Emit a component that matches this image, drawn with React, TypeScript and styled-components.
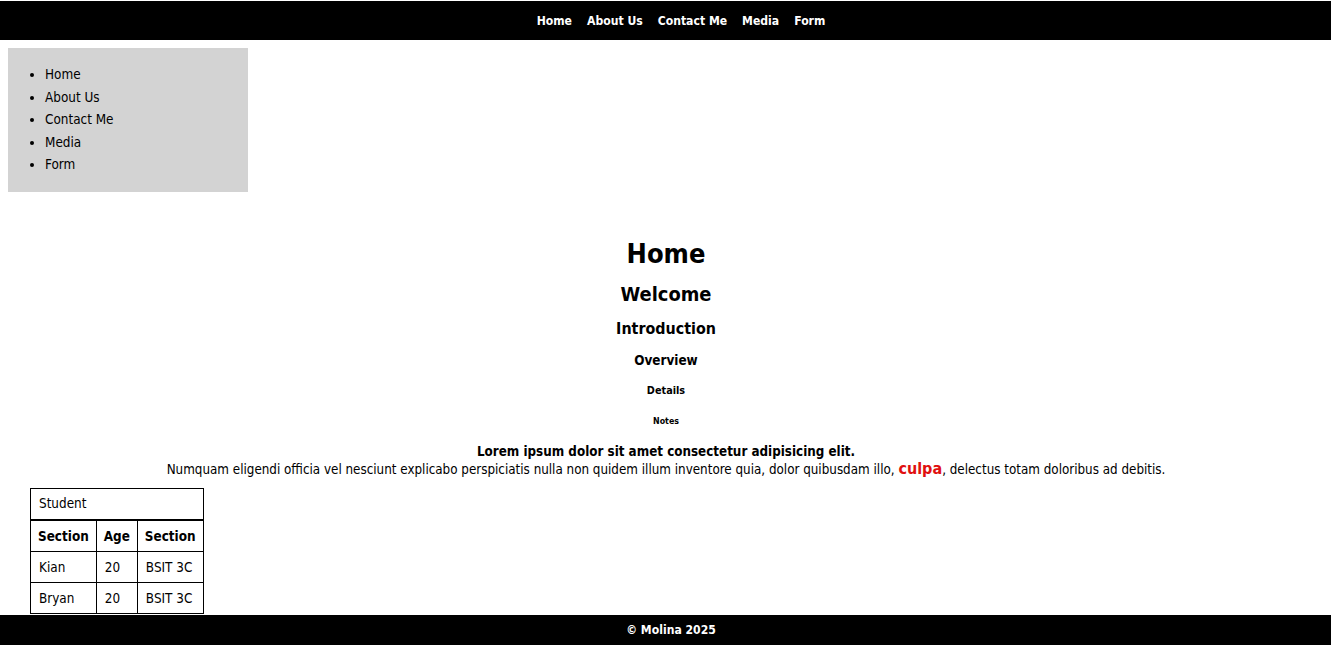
import React from "react";
import styled, { createGlobalStyle } from "styled-components";

const Global = createGlobalStyle`
  html, body { margin: 0; padding: 0; background: #fff; }
  body {
    font-family: "DejaVu Sans Condensed", "DejaVu Sans", sans-serif;
    font-stretch: condensed;
    font-size: 13.4px;
    color: #000;
  }
`;

const Header = styled.header`
  margin: 1px 1px 0 0;
  height: 39px;
  background: #000;
  display: flex;
  align-items: center;
  justify-content: center;
`;

const TopNav = styled.nav`
  display: flex;
  gap: 15px;
  padding-left: 31px;
`;

const TopLink = styled.a`
  color: #fff;
  font-size: 12.1px;
  font-weight: 600;
  text-decoration: none;
`;

const Page = styled.div`
  padding: 8px 8px 0;
`;

const Sidebar = styled.aside`
  width: 240px;
  height: 144px;
  background: #d3d3d3;
  box-sizing: border-box;
  padding-top: 16px;
`;

const SideList = styled.ul`
  margin: 0;
  padding-left: 37px;
  list-style: disc;
`;

const SideItem = styled.li`
  font-size: 13.4px;
  line-height: 22.5px;
`;

const Main = styled.main`
  text-align: center;
`;

const H1 = styled.h1`
  margin: 42px 0 0;
  font-size: 27px;
  line-height: 40px;
`;
const H2 = styled.h2`
  margin: 0;
  font-size: 19.9px;
  line-height: 42px;
`;
const H3 = styled.h3`
  margin: 0;
  font-size: 15.9px;
  line-height: 26px;
`;
const H4 = styled.h4`
  margin: 0;
  font-size: 13.4px;
  line-height: 38px;
`;
const H5 = styled.h5`
  margin: 0;
  font-size: 10.8px;
  line-height: 22px;
`;
const H6 = styled.h6`
  margin: 0;
  font-size: 8.8px;
  line-height: 38px;
`;

const Para = styled.p`
  margin: 3px 0 10px;
  font-size: 13.3px;
  line-height: 17px;
`;

const Accent = styled.span`
  color: #e01010;
  font-weight: bold;
  font-size: 16px;
`;

const Table = styled.table`
  margin-left: 22px;
  border-collapse: collapse;
  border: 1px solid #000;
  font-size: 13.4px;
  text-align: left;
`;

const Caption = styled.caption`
  border: 1px solid #000;
  text-align: left;
  padding: 0 8px;
  height: 30px;
  line-height: 30px;
`;

const Th = styled.th`
  border: 1px solid #000;
  padding: 0 7px;
  height: 30px;
`;

const Td = styled.td`
  border: 1px solid #000;
  padding: 0 7px 0 8px;
  height: 30px;
`;

const Footer = styled.footer`
  position: fixed;
  left: 0;
  right: 1px;
  bottom: 1px;
  height: 30px;
  padding-left: 11px;
  background: #000;
  color: #fff;
  font-size: 12.1px;
  font-weight: 600;
  display: flex;
  align-items: center;
  justify-content: center;
`;

const links = ["Home", "About Us", "Contact Me", "Media", "Form"];
const rows = [
  ["Kian", "20", "BSIT 3C"],
  ["Bryan", "20", "BSIT 3C"],
];

export default function App() {
  return (
    <>
      <Global />
      <Header>
        <TopNav>
          {links.map((l) => (
            <TopLink key={l} href="#">{l}</TopLink>
          ))}
        </TopNav>
      </Header>
      <Page>
        <Sidebar>
          <SideList>
            {links.map((l) => (
              <SideItem key={l}>{l}</SideItem>
            ))}
          </SideList>
        </Sidebar>
        <Main>
          <H1>Home</H1>
          <H2>Welcome</H2>
          <H3>Introduction</H3>
          <H4>Overview</H4>
          <H5>Details</H5>
          <H6>Notes</H6>
          <Para>
            <b>Lorem ipsum dolor sit amet consectetur adipisicing elit.</b>
            <br />
            Numquam eligendi officia vel nesciunt explicabo perspiciatis nulla non quidem illum inventore quia, dolor quibusdam illo, <Accent>culpa</Accent>, delectus totam doloribus ad debitis.
          </Para>
        </Main>
        <Table>
          <Caption>Student</Caption>
          <thead>
            <tr>
              <Th>Section</Th>
              <Th>Age</Th>
              <Th>Section</Th>
            </tr>
          </thead>
          <tbody>
            {rows.map((r, i) => (
              <tr key={i}>
                {r.map((c, j) => (
                  <Td key={j}>{c}</Td>
                ))}
              </tr>
            ))}
          </tbody>
        </Table>
      </Page>
      <Footer>© Molina 2025</Footer>
    </>
  );
}
